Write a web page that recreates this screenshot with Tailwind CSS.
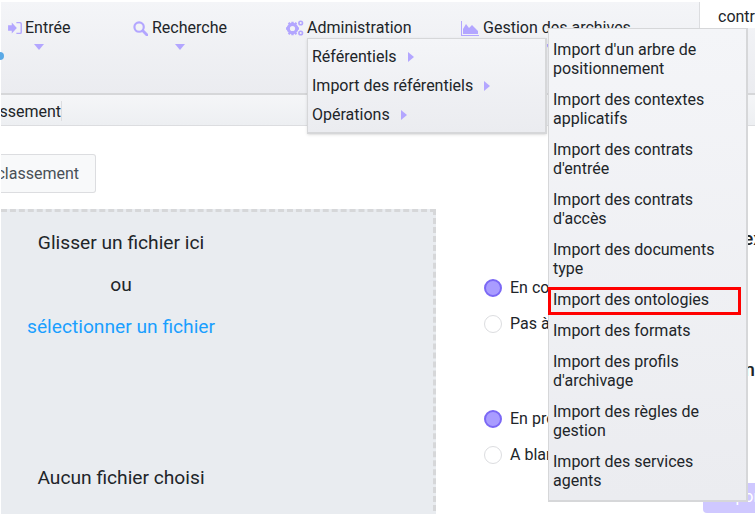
<!DOCTYPE html>
<html lang="fr">
<head>
    <meta charset="UTF-8">
    <title>Import des ontologies</title>
    <script src="https://cdn.jsdelivr.net/npm/@tailwindcss/browser@4"></script>
</head>
<body class="bg-white">
<div class="relative w-[755px] h-[514px] overflow-hidden bg-white font-['Roboto',sans-serif] text-base text-[#212529] pl-px pt-0.5">

    <!-- main menu bar -->
    <header class="relative flex h-[93px] border-b-2 border-[#d6d7d9] bg-gradient-to-b from-[#f4f5f8] to-[#ebecf0]">
        <span class="absolute -left-[5px] top-[50px] w-2 h-2 rounded-full bg-[#5aa9e6]"></span>

        <div class="flex flex-col w-[125px] pl-[7px] pt-4">
            <div class="flex items-center h-5">
                <svg class="w-[14px] h-[12px] mr-[3px]" viewBox="0 0 15 13" fill="#b3a6ff"><path d="M0 3.500h4V0.500l5.500 6L4 12.500V9.500H0z"/><path d="M9 0h4a2 2 0 0 1 2 2v9a2 2 0 0 1-2 2H9v-1.300h3.500a1 1 0 0 0 1-1V2.300a1 1 0 0 0-1-1H9z"/></svg>
                <span>Entrée</span>
            </div>
            <div class="ml-[26px] mt-[6px] w-0 h-0 border-x-[5px] border-x-transparent border-t-[6px] border-t-[#b3a6ff]"></div>
        </div>

        <div class="flex flex-col w-[153px] pl-[7px] pt-4">
            <div class="flex items-center h-5">
                <svg class="w-[15px] h-[15px] mr-1" viewBox="0 0 16 16" fill="none" stroke="#b3a6ff"><circle cx="6.500" cy="6.500" r="5" stroke-width="2.300"/><path d="M10.500 10.500L15 15" stroke-width="3" stroke-linecap="round"/></svg>
                <span>Recherche</span>
            </div>
            <div class="ml-[42px] mt-[6px] w-0 h-0 border-x-[5px] border-x-transparent border-t-[6px] border-t-[#b3a6ff]"></div>
        </div>

        <div class="flex flex-col w-[175px] pl-[7px] pt-4">
            <div class="flex items-center h-5">
                <svg class="w-[18px] h-[16px] mr-[3px]" viewBox="0 0 18 16" fill="#b3a6ff"><circle cx="6.500" cy="8.500" r="4.200" fill="none" stroke="#b3a6ff" stroke-width="3.200"/><path d="M5.300 1.800h2.400v2h-2.400zM5.300 13.200h2.400v2h-2.400zM0 7.300h2v2.400H0zM11 7.300h2v2.400h-2zM1.800 3.500l1.600-1.500 1.500 1.500-1.600 1.600zM8.200 13.500l1.500-1.600 1.500 1.500-1.500 1.600zM1.800 13.500l1.600-1.600 1.500 1.600-1.600 1.500zM8.200 3.500l1.500-1.500 1.500 1.500-1.500 1.600z"/><circle cx="14.700" cy="3" r="1.800" fill="none" stroke="#b3a6ff" stroke-width="1.600"/><circle cx="14.700" cy="13" r="1.800" fill="none" stroke="#b3a6ff" stroke-width="1.600"/></svg>
                <span>Administration</span>
            </div>
        </div>

        <div class="flex flex-col w-[245px] pl-[7px] pt-4">
            <div class="flex items-center h-5">
                <svg class="w-[18px] h-[15px] mr-[4px]" viewBox="0 0 18 15" fill="#b3a6ff"><path d="M0 0h1v14h17v1H0z"/><path d="M2 13V8l3-5 3 4 3-3 3 3 3 3v3z"/></svg>
                <span>Gestion des archives</span>
            </div>
            <div class="ml-[79px] mt-[6px] w-0 h-0 border-x-[5px] border-x-transparent border-t-[6px] border-t-[#b3a6ff]"></div>
        </div>

        <div class="flex-1 h-[26px] bg-white border-l border-[#dcdde0] pl-[18px] pt-[3px] overflow-hidden">contrats</div>
    </header>

    <!-- breadcrumb bar -->
    <div class="flex h-[31px] border-b border-[#dcdde0] bg-gradient-to-b from-[#f5f6f8] to-[#edeff2]">
        <div class="flex justify-end items-center w-[61px] overflow-hidden whitespace-nowrap border-r border-[#dcdde0] mt-[6px] mb-[4px] pt-[2px]">Arbre de classement</div>
    </div>

    <!-- action button -->
    <div class="pt-7">
        <div class="flex justify-end items-center w-[95px] h-[39px] overflow-hidden whitespace-nowrap pr-4 text-[#495057] bg-[#f8f9fa] border border-[#dcdde0] border-l-0 rounded-r-[3px]">de classement</div>
    </div>

    <!-- upload zone and options -->
    <div class="flex pt-[16px]">
        <div class="w-[435px] h-[320px] shrink-0 bg-[#e9ecf0] border-[3px] border-dashed border-[#d6d7d9] border-l-0">
            <div class="flex flex-col items-center w-[240px] text-[19.200px]">
                <p class="mt-[18px] h-[26px] leading-[26px]">Glisser un fichier ici</p>
                <p class="mt-4 h-[26px] leading-[26px]">ou</p>
                <p class="mt-4 h-[26px] leading-[26px] text-[#1a9fff]">sélectionner un fichier</p>
                <p class="mt-[125px] h-[26px] leading-[26px]">Aucun fichier choisi</p>
            </div>
        </div>

        <div class="flex-1 min-w-0 pl-[48px] pt-[16px]">
            <div class="flex justify-end h-6 -mr-2 whitespace-nowrap text-[19.200px] font-medium">Mode d'ex</div>
            <div class="flex flex-col gap-[10px] mt-[26px]">
                <div class="flex items-center gap-2 h-[26px]">
                    <span class="w-[18px] h-[18px] rounded-full bg-[#a99cff] border-2 border-[#7b68f5]"></span>
                    <span>En cours</span>
                </div>
                <div class="flex items-center gap-2 h-[26px]">
                    <span class="w-[18px] h-[18px] rounded-full bg-white border border-[#dcdde0]"></span>
                    <span>Pas à jour</span>
                </div>
            </div>
            <div class="flex justify-end h-6 mt-[19px] whitespace-nowrap text-[19.200px] font-medium">Mention</div>
            <div class="flex flex-col gap-[10px] mt-[26px]">
                <div class="flex items-center gap-2 h-[26px]">
                    <span class="w-[18px] h-[18px] rounded-full bg-[#a99cff] border-2 border-[#7b68f5]"></span>
                    <span>En production</span>
                </div>
                <div class="flex items-center gap-2 h-[26px]">
                    <span class="w-[18px] h-[18px] rounded-full bg-white border border-[#dcdde0]"></span>
                    <span>A blanc</span>
                </div>
            </div>
            <div class="flex justify-end mt-[15px] -mr-2">
                <div class="w-[60px] h-[30px] pl-[14px] leading-[28px] rounded-[4px] bg-[#cfc8ff] text-white whitespace-nowrap overflow-hidden">Importer</div>
            </div>
        </div>
    </div>

    <!-- dropdown: Administration -->
    <div class="absolute left-[307px] top-[38px] w-[240px] h-[96px] flex flex-col pt-[3px] pl-[4px] border-2 border-[#d6d7d9] border-l border-t bg-gradient-to-b from-[#f4f5f8] to-[#ebecf0] shadow-sm">
        <div class="flex items-center h-[29px] gap-[11px]"><span>Référentiels</span><span class="w-0 h-0 border-y-[5px] border-y-transparent border-l-[6px] border-l-[#b3a6ff]"></span></div>
        <div class="flex items-center h-[29px] gap-[11px]"><span>Import des référentiels</span><span class="w-0 h-0 border-y-[5px] border-y-transparent border-l-[6px] border-l-[#b3a6ff]"></span></div>
        <div class="flex items-center h-[29px] gap-[11px]"><span>Opérations</span><span class="w-0 h-0 border-y-[5px] border-y-transparent border-l-[6px] border-l-[#b3a6ff]"></span></div>
    </div>

    <!-- dropdown: Import des référentiels -->
    <div class="absolute left-[548px] top-[28px] w-[200px] h-[474px] pt-[5.400px] pl-[4px] pr-[10px] border-2 border-[#d6d7d9] border-l border-t bg-gradient-to-b from-[#f4f5f8] to-[#ebecf0] leading-[19.2px]">
        <div class="py-[5.800px]">Import d'un arbre de positionnement</div>
        <div class="py-[5.800px]">Import des contextes applicatifs</div>
        <div class="py-[5.800px]">Import des contrats d'entrée</div>
        <div class="py-[5.800px]">Import des contrats d'accès</div>
        <div class="py-[5.800px]">Import des documents type</div>
        <div class="py-[5.800px]">Import des ontologies</div>
        <div class="py-[5.800px]">Import des formats</div>
        <div class="py-[5.800px]">Import des profils d'archivage</div>
        <div class="py-[5.800px]">Import des règles de gestion</div>
        <div class="py-[5.800px]">Import des services agents</div>
    </div>

    <!-- annotation box -->
    <div class="absolute left-[548px] top-[287px] w-[193px] h-[28px] border-[3px] border-[#ff0000]"></div>
</div>
</body>
</html>
